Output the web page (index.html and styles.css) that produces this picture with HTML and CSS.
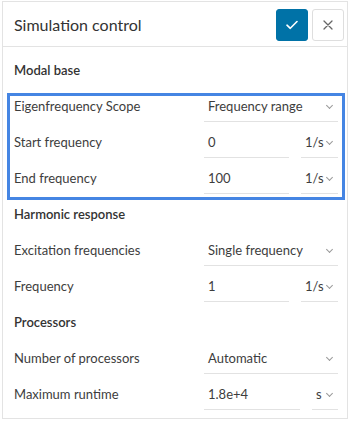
FILE: index.html
```html
<!DOCTYPE html>
<html>
<head>
<meta charset="utf-8">
<link rel="stylesheet" href="styles.css">
</head>
<body>
<div class="panel">
  <div class="header">
    <div class="title">Simulation control</div>
    <button class="btn btn-ok" aria-label="Save">
      <svg width="12" height="10" viewBox="0 0 12 10"><path d="M1 5.2 L4.3 8.3 L11 1.5" fill="none" stroke="#fff" stroke-width="1.6" stroke-linecap="round" stroke-linejoin="round"/></svg>
    </button>
    <button class="btn btn-close" aria-label="Close">
      <svg width="10" height="10" viewBox="0 0 10 10"><path d="M1 1 L9 9 M9 1 L1 9" fill="none" stroke="#666" stroke-width="1.3" stroke-linecap="round"/></svg>
    </button>
  </div>
  <div class="content">
    <div class="section-title">Modal base</div>
    <div class="group highlight">
      <div class="row">
        <div class="label">Eigenfrequency Scope</div>
        <div class="field select wide"><span>Frequency range</span><i class="chev"></i></div>
      </div>
      <div class="row">
        <div class="label">Start frequency</div>
        <div class="field input num">0</div>
        <div class="field select unit"><span>1/s</span><i class="chev"></i></div>
      </div>
      <div class="row">
        <div class="label">End frequency</div>
        <div class="field input num">100</div>
        <div class="field select unit"><span>1/s</span><i class="chev"></i></div>
      </div>
    </div>
    <div class="section-title">Harmonic response</div>
    <div class="group">
      <div class="row">
        <div class="label">Excitation frequencies</div>
        <div class="field select wide"><span>Single frequency</span><i class="chev"></i></div>
      </div>
      <div class="row">
        <div class="label">Frequency</div>
        <div class="field input num">1</div>
        <div class="field select unit"><span>1/s</span><i class="chev"></i></div>
      </div>
    </div>
    <div class="section-title">Processors</div>
    <div class="group">
      <div class="row">
        <div class="label">Number of processors</div>
        <div class="field select wide"><span>Automatic</span><i class="chev"></i></div>
      </div>
      <div class="row">
        <div class="label">Maximum runtime</div>
        <div class="field input num long">1.8e+4</div>
        <div class="field select unit short"><span>s</span><i class="chev"></i></div>
      </div>
    </div>
  </div>
</div>
</body>
</html>
```

FILE: styles.css
```css
* { box-sizing: border-box; }
html, body { margin: 0; padding: 0; background: #fff; }
body {
  font-family: Lato, "Open Sans", sans-serif;
  color: #333;
  width: 352px;
  height: 421px;
  overflow: hidden;
}
.panel {
  margin: 1px 4px 0 2px;
  width: 346px;
  height: 418px;
  border: 1px solid #e3e3e3;
  background: #fff;
}
.header {
  height: 45px;
  border-bottom: 1px solid #e3e3e3;
  display: flex;
  align-items: center;
  padding: 0 3px 0 11px;
  gap: 4px;
}
.title {
  flex: 1;
  font-size: 16px;
  color: #333;
  padding-top: 1px;
}
.btn {
  width: 32px;
  height: 32px;
  border-radius: 3px;
  display: flex;
  align-items: center;
  justify-content: center;
  padding: 0;
  margin-top: 2px;
}
.btn-ok {
  background: #0072a7;
  border: 1px solid #0072a7;
}
.btn-close {
  background: #fff;
  border: 1px solid #dedede;
}
.content {
  padding: 5px 7px 0 11px;
}
.section-title {
  height: 36px;
  display: flex;
  align-items: center;
  font-size: 13px;
  font-weight: 600;
  color: #333;
}
.group { position: relative; }
.highlight::after {
  content: "";
  position: absolute;
  top: 5px;
  bottom: -4px;
  left: -7px;
  right: -5px;
  border: 3px solid #4585e3;
  pointer-events: none;
}
.row {
  height: 36px;
  display: flex;
  align-items: center;
  font-size: 13px;
}
.label {
  width: 190px;
  color: #3d3d3d;
}
.field {
  height: 32px;
  border-bottom: 1px solid #e2e2e2;
  display: flex;
  align-items: center;
  padding: 1px 5px 0 4px;
  color: #3d3d3d;
}
.select { justify-content: space-between; }
.wide { width: 134px; }
.num { width: 85px; margin-right: 12px; }
.num.long { width: 96px; }
.unit { width: 37px; }
.unit.short { width: 26px; }
.chev {
  width: 5px;
  height: 5px;
  border-right: 1px solid #999;
  border-bottom: 1px solid #999;
  transform: rotate(45deg);
  margin-top: -2px;
  margin-right: 1px;
}
```
